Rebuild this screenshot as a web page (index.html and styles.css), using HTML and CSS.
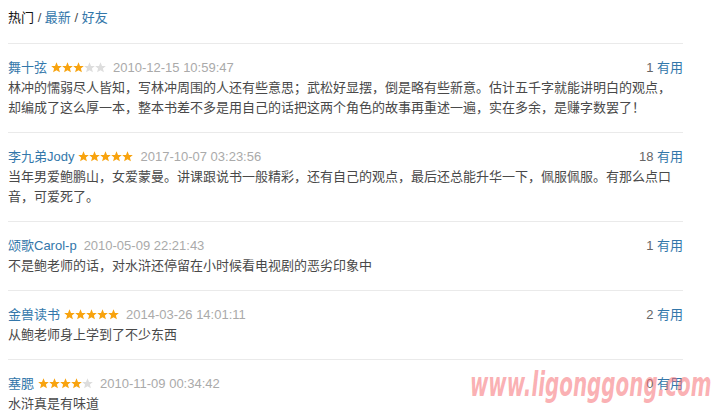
FILE: index.html
```html
<!DOCTYPE html>
<html lang="zh-CN">
<head>
  <meta charset="UTF-8" />
  <title>短评</title>
  <link rel="stylesheet" href="styles.css">
</head>
<body>
  <div class="tabs">
    <span class="current">热门</span> / <a href="#">最新</a> / <a href="#">好友</a>
  </div>

  <div class="comments">
    <div class="comment">
      <div class="meta">
        <span class="info">
          <a class="name" href="#">舞十弦</a>
          <svg class="stars" viewBox="0 0 55 11" width="55" height="11">
            <use href="#star" x="0" class="on" /><use href="#star" x="11" class="on" /><use href="#star" x="22" class="on" /><use href="#star" x="33" class="off" /><use href="#star" x="44" class="off" />
          </svg>
          <span class="time">2010-12-15 10:59:47</span>
        </span>
        <span class="votes">1 <a href="#">有用</a></span>
      </div>
      <p>林冲的懦弱尽人皆知，写林冲周围的人还有些意思；武松好显摆，倒是略有些新意。估计五千字就能讲明白的观点，却编成了这么厚一本，整本书差不多是用自己的话把这两个角色的故事再重述一遍，实在多余，是赚字数罢了！</p>
    </div>

    <div class="comment">
      <div class="meta">
        <span class="info">
          <a class="name" href="#">李九弟Jody</a>
          <svg class="stars" viewBox="0 0 55 11" width="55" height="11">
            <use href="#star" x="0" class="on" /><use href="#star" x="11" class="on" /><use href="#star" x="22" class="on" /><use href="#star" x="33" class="on" /><use href="#star" x="44" class="on" />
          </svg>
          <span class="time">2017-10-07 03:23:56</span>
        </span>
        <span class="votes">18 <a href="#">有用</a></span>
      </div>
      <p>当年男爱鲍鹏山，女爱蒙曼。讲课跟说书一般精彩，还有自己的观点，最后还总能升华一下，佩服佩服。有那么点口音，可爱死了。</p>
    </div>

    <div class="comment">
      <div class="meta">
        <span class="info">
          <a class="name" href="#">颂歌Carol-p</a>
          <span class="time">2010-05-09 22:21:43</span>
        </span>
        <span class="votes">1 <a href="#">有用</a></span>
      </div>
      <p>不是鲍老师的话，对水浒还停留在小时候看电视剧的恶劣印象中</p>
    </div>

    <div class="comment">
      <div class="meta">
        <span class="info">
          <a class="name" href="#">金兽读书</a>
          <svg class="stars" viewBox="0 0 55 11" width="55" height="11">
            <use href="#star" x="0" class="on" /><use href="#star" x="11" class="on" /><use href="#star" x="22" class="on" /><use href="#star" x="33" class="on" /><use href="#star" x="44" class="on" />
          </svg>
          <span class="time">2014-03-26 14:01:11</span>
        </span>
        <span class="votes">2 <a href="#">有用</a></span>
      </div>
      <p>从鲍老师身上学到了不少东西</p>
    </div>

    <div class="comment">
      <div class="meta">
        <span class="info">
          <a class="name" href="#">塞腮</a>
          <svg class="stars" viewBox="0 0 55 11" width="55" height="11">
            <use href="#star" x="0" class="on" /><use href="#star" x="11" class="on" /><use href="#star" x="22" class="on" /><use href="#star" x="33" class="on" /><use href="#star" x="44" class="off" />
          </svg>
          <span class="time">2010-11-09 00:34:42</span>
        </span>
        <span class="votes">0 <a href="#">有用</a></span>
      </div>
      <p>水浒真是有味道</p>
    </div>
  </div>

  <div class="watermark">www.ligonggong.com</div>

  <svg width="0" height="0" class="defs">
    <defs>
      <polygon id="star" points="5.5,0.3 7,3.9 10.8,4.1 7.9,6.5 8.9,10.3 5.5,8.2 2.1,10.3 3.1,6.5 0.2,4.1 4,3.9" />
    </defs>
  </svg>
</body>
</html>
```

FILE: styles.css
```css
:root {
  --link: #3377aa;
  --text: #494949;
  --muted: #aaa;
  --line: #eaeaea;
  --star-on: #f8a30e;
  --star-off: #ddd;
}

body {
  margin: 8px;
  font-family: "Liberation Sans", "Noto Sans CJK SC", sans-serif;
  font-size: 13px;
  color: var(--text);
  background: #fff;
  overflow: hidden;
}

a {
  color: var(--link);
  text-decoration: none;
}

.tabs {
  line-height: 20px;
  color: var(--text);
  margin-bottom: 15px;
}
.tabs .current {
  color: #111;
}

.comments {
  width: 675px;
}

.comment {
  border-top: 1px solid var(--line);
  padding: 14px 0;
}

.meta {
  display: flex;
  justify-content: space-between;
  line-height: 20px;
}

.info {
  display: flex;
  align-items: center;
  gap: 4px;
}

.stars {
  display: block;
  margin-top: -1px;
}
.stars .on {
  fill: var(--star-on);
}
.stars .off {
  fill: var(--star-off);
}

.time {
  color: var(--muted);
  margin-left: 3px;
}

.votes {
  color: #666;
}

.comment p {
  margin: 0;
  line-height: 20px;
}

.defs {
  position: absolute;
}

/* pink site stamp laid over the bottom right corner */
.watermark {
  position: absolute;
  left: 470px;
  top: 364px;
  font-family: "DejaVu Sans", sans-serif;
  font-weight: bold;
  font-style: italic;
  font-size: 34px;
  color: rgba(247, 110, 115, 0.55);
  transform: scaleX(0.585);
  transform-origin: left top;
  white-space: nowrap;
}
```
